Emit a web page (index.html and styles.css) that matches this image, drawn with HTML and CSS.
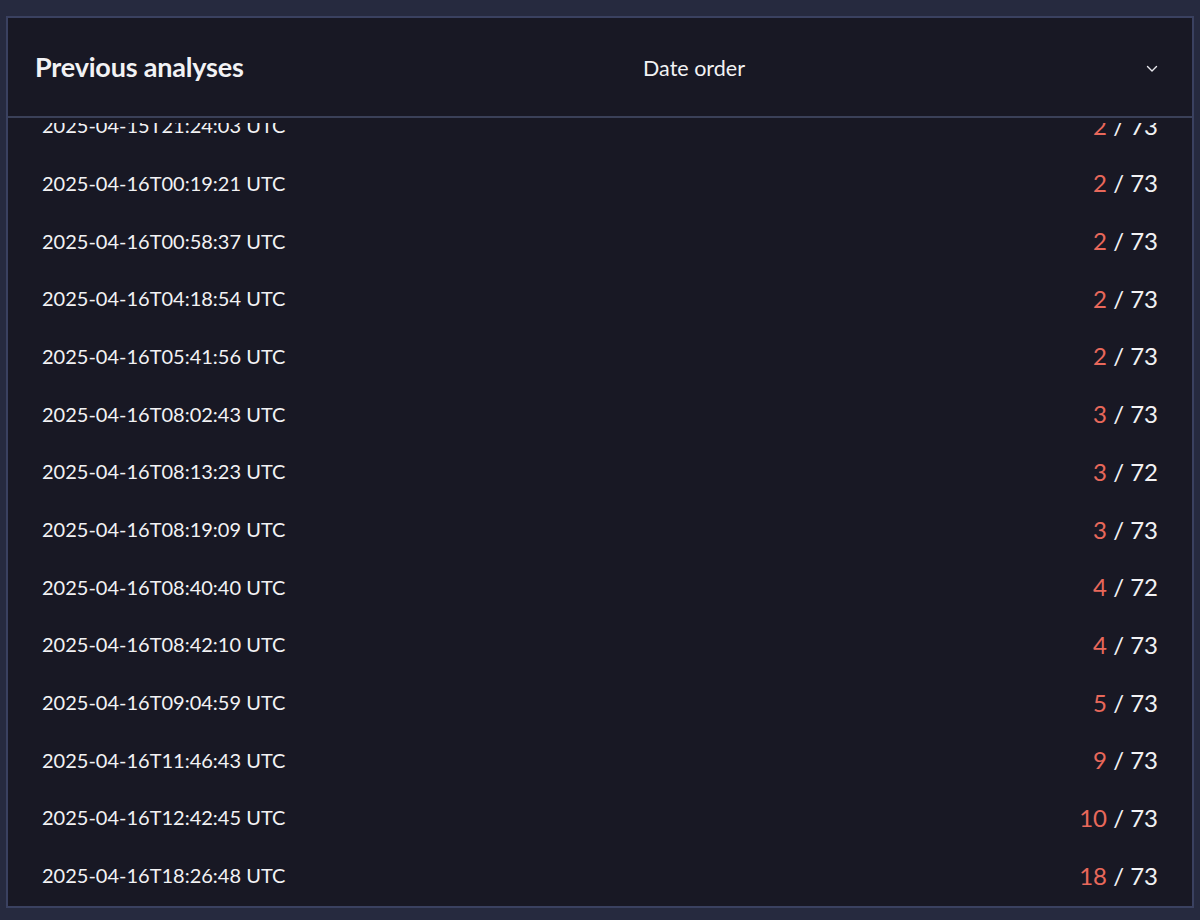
FILE: index.html
```html
<!DOCTYPE html>
<html>
<head>
<meta charset="utf-8">
<link rel="stylesheet" href="styles.css">
</head>
<body>
<div class="panel">
  <div class="header">
    <h2 class="title">Previous analyses</h2>
    <div class="select">
      <span class="select-label">Date order</span>
      <svg class="chevron" width="12" height="8" viewBox="0 0 12 8"><path d="M1.5 1.5 L6 6 L10.5 1.5" fill="none" stroke="#e8e8ee" stroke-width="1.4" stroke-linecap="round" stroke-linejoin="round"/></svg>
    </div>
  </div>
  <div class="list">
    <div class="row"><span class="date">2025-04-15T21:24:03 UTC</span><span class="score"><span class="hits">2</span> / 73</span></div>
    <div class="row"><span class="date">2025-04-16T00:19:21 UTC</span><span class="score"><span class="hits">2</span> / 73</span></div>
    <div class="row"><span class="date">2025-04-16T00:58:37 UTC</span><span class="score"><span class="hits">2</span> / 73</span></div>
    <div class="row"><span class="date">2025-04-16T04:18:54 UTC</span><span class="score"><span class="hits">2</span> / 73</span></div>
    <div class="row"><span class="date">2025-04-16T05:41:56 UTC</span><span class="score"><span class="hits">2</span> / 73</span></div>
    <div class="row"><span class="date">2025-04-16T08:02:43 UTC</span><span class="score"><span class="hits">3</span> / 73</span></div>
    <div class="row"><span class="date">2025-04-16T08:13:23 UTC</span><span class="score"><span class="hits">3</span> / 72</span></div>
    <div class="row"><span class="date">2025-04-16T08:19:09 UTC</span><span class="score"><span class="hits">3</span> / 73</span></div>
    <div class="row"><span class="date">2025-04-16T08:40:40 UTC</span><span class="score"><span class="hits">4</span> / 72</span></div>
    <div class="row"><span class="date">2025-04-16T08:42:10 UTC</span><span class="score"><span class="hits">4</span> / 73</span></div>
    <div class="row"><span class="date">2025-04-16T09:04:59 UTC</span><span class="score"><span class="hits">5</span> / 73</span></div>
    <div class="row"><span class="date">2025-04-16T11:46:43 UTC</span><span class="score"><span class="hits">9</span> / 73</span></div>
    <div class="row"><span class="date">2025-04-16T12:42:45 UTC</span><span class="score"><span class="hits">10</span> / 73</span></div>
    <div class="row"><span class="date">2025-04-16T18:26:48 UTC</span><span class="score"><span class="hits">18</span> / 73</span></div>
  </div>
</div>
</body>
</html>
```

FILE: styles.css
```css
html, body {
  margin: 0;
  padding: 0;
  background: #262a3f;
}
body {
  padding: 16px 6px 0 6px;
  height: 920px;
  box-sizing: border-box;
  font-family: Lato, "Noto Sans", sans-serif;
  color: #f2f2f4;
}
.panel {
  width: 1188px;
  height: 892px;
  box-sizing: border-box;
  border: 2px solid #3a4160;
  background: #181824;
  display: flex;
  flex-direction: column;
  overflow: hidden;
}
.header {
  height: 100px;
  flex: none;
  box-sizing: border-box;
  border-bottom: 2px solid #3a4058;
  display: flex;
  align-items: center;
  padding: 2px 34px 0 27px;
}
.title {
  margin: -3px 0 0 0;
  font-size: 27px;
  font-weight: 700;
  letter-spacing: -0.2px;
  width: 235px;
}
.select {
  flex: 1;
  display: flex;
  align-items: center;
  position: relative;
  justify-content: center;
  padding-right: 40px;
}
.select-label {
  font-size: 21.5px;
}
.chevron {
  position: absolute;
  right: 0;
  top: 50%;
  margin-top: -3px;
}
.list {
  flex: 1;
  margin-top: 5px;
  padding-bottom: 2px;
  display: flex;
  flex-direction: column;
  justify-content: flex-end;
  overflow: hidden;
  min-height: 0;
}
.row {
  flex: none;
  height: 57.7px;
  display: flex;
  align-items: center;
  justify-content: space-between;
  padding: 0 34px 0 34px;
  font-size: 20px;
}
.score {
  font-size: 24px;
}
.hits {
  color: #e8685b;
}
```
